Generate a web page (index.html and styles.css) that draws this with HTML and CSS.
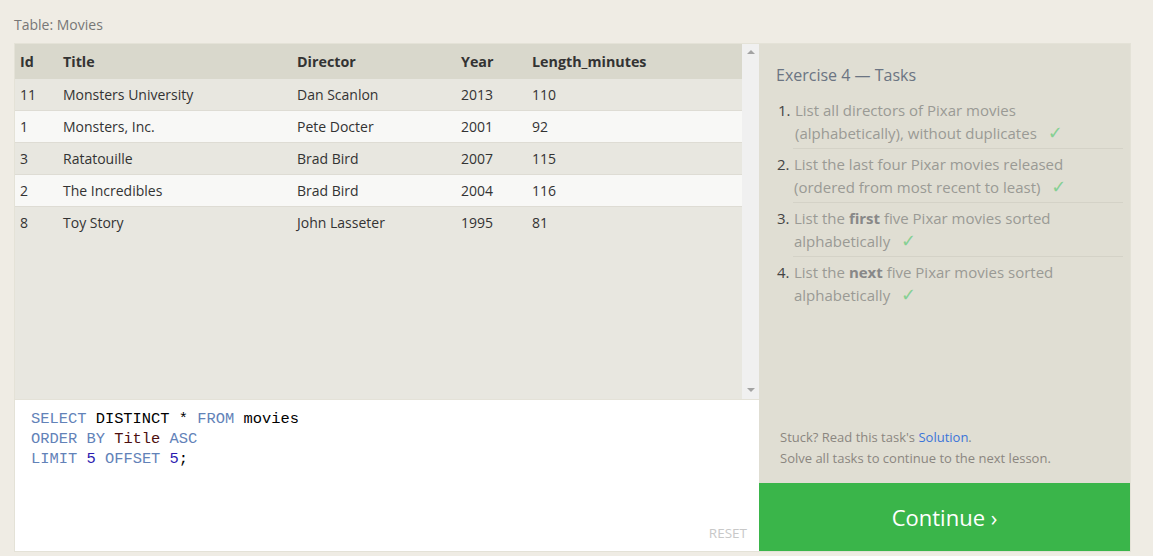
FILE: index.html
```html
<!DOCTYPE html>
<html>
<head>
<meta charset="utf-8">
<link rel="stylesheet" href="styles.css">
</head>
<body>
<div class="page">
  <div class="table-label">Table: Movies</div>
  <div class="workspace">
    <div class="left">
      <div class="results">
        <div class="table-area">
          <table class="movies">
            <thead>
              <tr><th class="c-id">Id</th><th class="c-title">Title</th><th class="c-dir">Director</th><th class="c-year">Year</th><th>Length_minutes</th></tr>
            </thead>
            <tbody>
              <tr><td>11</td><td>Monsters University</td><td>Dan Scanlon</td><td>2013</td><td>110</td></tr>
              <tr><td>1</td><td>Monsters, Inc.</td><td>Pete Docter</td><td>2001</td><td>92</td></tr>
              <tr><td>3</td><td>Ratatouille</td><td>Brad Bird</td><td>2007</td><td>115</td></tr>
              <tr><td>2</td><td>The Incredibles</td><td>Brad Bird</td><td>2004</td><td>116</td></tr>
              <tr><td>8</td><td>Toy Story</td><td>John Lasseter</td><td>1995</td><td>81</td></tr>
            </tbody>
          </table>
        </div>
        <div class="scrollbar">
          <span class="arrow up"></span>
          <span class="arrow down"></span>
        </div>
      </div>
      <div class="editor">
        <pre class="code"><span class="kw">SELECT</span> DISTINCT * <span class="kw">FROM</span> movies
<span class="kw">ORDER BY</span> <span class="id">Title</span> <span class="kw">ASC</span>
<span class="kw">LIMIT</span> <span class="num">5</span> <span class="kw">OFFSET</span> <span class="num">5</span>;</pre>
        <div class="reset">RESET</div>
      </div>
    </div>
    <div class="right">
      <div class="tasks">
        <h2 class="tasks-title">Exercise 4 — Tasks</h2>
        <ol class="task-list">
          <li><span class="n">1.</span><span class="t">List all directors of Pixar movies (alphabetically), without duplicates <span class="check">✓</span></span></li>
          <li><span class="n">2.</span><span class="t">List the last four Pixar movies released (ordered from most recent to least) <span class="check">✓</span></span></li>
          <li><span class="n">3.</span><span class="t">List the <b>first</b> five Pixar movies sorted alphabetically <span class="check">✓</span></span></li>
          <li><span class="n">4.</span><span class="t">List the <b>next</b> five Pixar movies sorted alphabetically <span class="check">✓</span></span></li>
        </ol>
        <div class="help">
          <p>Stuck? Read this task's <a href="#">Solution</a>.</p>
          <p>Solve all tasks to continue to the next lesson.</p>
        </div>
      </div>
      <div class="continue">Continue ›</div>
    </div>
  </div>
</div>
</body>
</html>
```

FILE: styles.css
```css
html, body {
  margin: 0;
  padding: 0;
  background: #efece4;
  font-family: "Open Sans", "Noto Sans", sans-serif;
  color: #333;
}
.page {
  padding: 15px 0 0 14px;
  width: 1117px;
}
.table-label {
  font-size: 14px;
  line-height: 20px;
  color: #777;
  margin-bottom: 8px;
}
.workspace {
  display: flex;
  border: 1px solid #e4e2d7;
  height: 507px;
  width: 1115px;
}
.left {
  width: 744px;
  display: flex;
  flex-direction: column;
}
.results {
  display: flex;
  height: 355px;
  border-bottom: 1px solid #e4e2d8;
  background: #e8e7e0;
}
.table-area {
  flex: 1;
}
.movies {
  width: 100%;
  border-collapse: collapse;
  font-size: 14px;
}
.movies th {
  background: #d9d8cc;
  text-align: left;
  font-weight: 700;
  font-size: 14.3px;
  height: 35px;
  padding: 0 5px;
  color: #333;
}
.movies td {
  height: 31px;
  padding: 0 5px;
  border-bottom: 1px solid #dedcd4;
  color: #333;
}
.movies tbody tr:last-child td {
  border-bottom-color: transparent;
}
.movies tbody tr:nth-child(even) td {
  background: #f8f8f6;
}
.c-id { width: 33px; }
.c-title { width: 224px; }
.c-dir { width: 154px; }
.c-year { width: 61px; }
.scrollbar {
  width: 17px;
  background: #f0f0f0;
  display: flex;
  flex-direction: column;
  justify-content: space-between;
  align-items: center;
  padding: 6px 0 7px;
  box-sizing: border-box;
}
.arrow {
  width: 0;
  height: 0;
  border-left: 4px solid transparent;
  border-right: 4px solid transparent;
}
.arrow.up { border-bottom: 4px solid #a3a3a3; }
.arrow.down { border-top: 4px solid #a3a3a3; }
.editor {
  flex: 1;
  background: #fff;
  display: flex;
  flex-direction: column;
  justify-content: space-between;
}
.code {
  margin: 0;
  padding: 9px 16px 8px;
  font-family: "Liberation Mono", "DejaVu Sans Mono", monospace;
  font-size: 15.4px;
  line-height: 20px;
  color: #000;
}
.kw { color: #6282b8; }
.id { color: #4d0f0f; }
.num { color: #2b1bb0; }
.reset {
  align-self: flex-end;
  font-size: 13.5px;
  line-height: 18px;
  color: #c8c8c8;
  padding: 0 12px 9px 0;
}
.right {
  width: 371px;
  display: flex;
  flex-direction: column;
}
.tasks {
  flex: 1;
  background: #e0ded3;
  padding: 20px 7px 0 17px;
  display: flex;
  flex-direction: column;
}
.tasks-title {
  margin: 0 0 9px;
  font-weight: 400;
  font-size: 16px;
  line-height: 22px;
  color: #6b7482;
}
.task-list {
  list-style: none;
  margin: 0;
  padding: 0;
  font-size: 15px;
  line-height: 23px;
}
.task-list li {
  display: flex;
  padding: 4px 0 3px;
  color: #9a9a95;
}
.task-list li + li {
  border-top: 1px solid #d4d2c7;
  margin-left: 17px;
}
.task-list li + li .n { margin-left: -16px; }
.n {
  width: 17px;
  flex: none;
  color: #444;
  margin-left: 2px;
}
.t b { color: #888; }
.check {
  color: #86d093;
  font-family: "DejaVu Sans", sans-serif;
  font-size: 18px;
  line-height: 20px;
  margin-left: 7px;
}
.help {
  margin-top: auto;
  padding: 0 0 14px 4px;
  font-size: 13px;
  line-height: 21px;
  color: #8b8680;
}
.help p { margin: 0; }
.help a { color: #3b74d9; text-decoration: none; }
.continue {
  height: 68px;
  background: #3ab54a;
  color: #fff;
  font-size: 22px;
  display: flex;
  align-items: center;
  justify-content: center;
}
```
